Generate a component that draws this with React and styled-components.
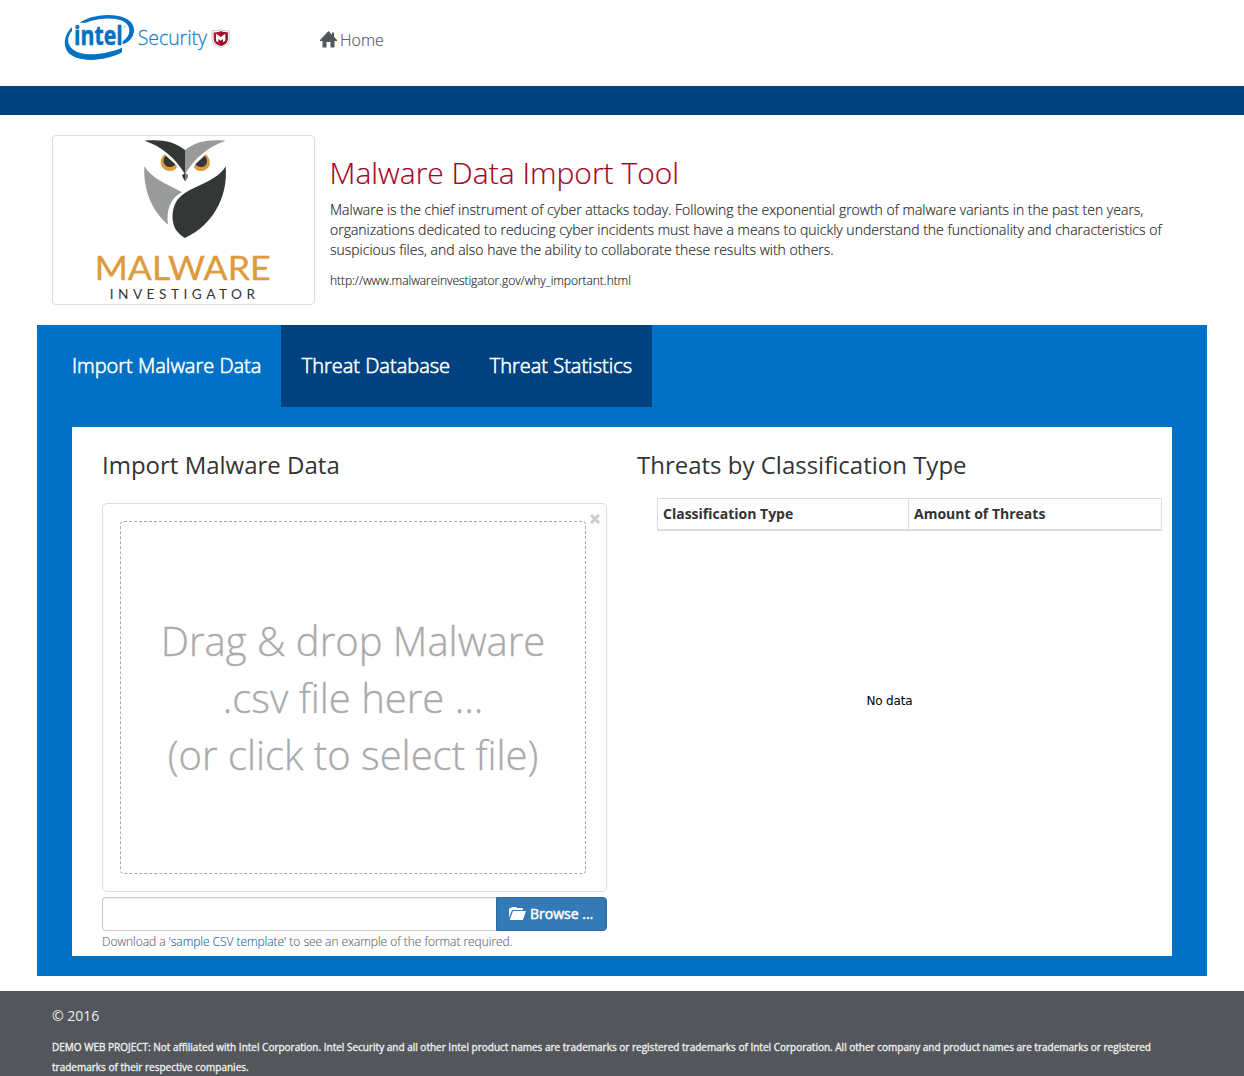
import React from "react";
import styled, { createGlobalStyle } from "styled-components";

const Global = createGlobalStyle`
  * { box-sizing: border-box; }
  body {
    margin: 0;
    background: #fff;
    color: #333;
    font-family: "Open Sans", sans-serif;
    font-size: 14px;
    font-weight: 300;
    line-height: 20px;
    overflow: hidden;
  }
  h1, h2, p { margin: 0; }
  a { color: inherit; text-decoration: none; }
`;

const Header = styled.header`
  display: flex;
  height: 86px;
  padding: 5px 0 0 55px;
`;

const BrandLogo = styled.svg`
  width: 190px;
  height: 65px;
  flex: none;
`;

const HomeLink = styled.a`
  display: flex;
  align-items: center;
  gap: 3px;
  height: 24px;
  margin: 23px 0 0 75px;
  color: #53565a;
  font-size: 16px;
  line-height: 24px;
  -webkit-text-stroke: 0.15px;
`;

const Band = styled.div`
  height: 29px;
  background: #004280;
`;

const Container = styled.div`
  width: 1170px;
  margin: 0 auto;
`;

const Intro = styled.section`
  display: flex;
  gap: 15px;
  padding: 20px 15px;
`;

const Thumbnail = styled.div`
  width: 263px;
  height: 170px;
  flex: none;
  border: 1px solid #ddd;
  border-radius: 4px;
  svg { display: block; }
`;

const IntroText = styled.div`
  padding-top: 20px;
  color: #222;
  white-space: nowrap;
  -webkit-text-stroke: 0.15px;
`;

const Title = styled.h1`
  color: #a50021;
  font-size: 30px;
  font-weight: 300;
  line-height: 36px;
  margin-left: -0.5px;
`;

const Copy = styled.p`
  margin-top: 9px;
  letter-spacing: -0.004px;
`;

const Line = styled.span`
  display: block;
`;

const Source = styled.p`
  margin-top: 11px;
  font-size: 12px;
  letter-spacing: -0.05px;
`;

const Panel = styled.main`
  height: 651px;
  padding: 0 35px 20px 15px;
  background: #0071c5;
`;

const Tabs = styled.nav`
  display: flex;
  height: 82px;
`;

const Tab = styled.a`
  padding: 26px 0 0 ${(p) => (p.$active ? 20 : 20.7)}px;
  width: ${(p) => p.$width}px;
  background: ${(p) => (p.$active ? "#0071c5" : "#004280")};
  color: #fff;
  font-size: 20px;
  font-weight: 300;
  line-height: 30px;
  -webkit-text-stroke: 0.6px;
  white-space: nowrap;
`;

const Card = styled.section`
  display: flex;
  gap: 30px;
  height: 529px;
  margin: 20px 0 0 20px;
  padding: 22px 10px 0 30px;
  background: #fff;
`;

const Column = styled.div`
  width: ${(p) => p.$width}px;
  flex: none;
`;

const Heading = styled.h2`
  font-size: 24px;
  font-weight: 400;
  line-height: 32px;
  white-space: nowrap;
`;

const Preview = styled.div`
  position: relative;
  height: 389px;
  margin-top: 22px;
  padding: 17px 20px 17px 17px;
  border: 1px solid #ddd;
  border-radius: 5px;
`;

const CloseButton = styled.button`
  position: absolute;
  top: 10px;
  right: 6px;
  width: 10px;
  height: 10px;
  padding: 0;
  border: 0;
  background: none;
  color: #ccc;
  svg { display: block; }
`;

const DropZone = styled.div`
  height: 353px;
  padding-top: 90px;
  border: 1px dashed #aaa;
  border-radius: 4px;
  color: #aaa;
  font-size: 40px;
  line-height: 57px;
  text-align: center;
  white-space: nowrap;
  -webkit-text-stroke: 0.3px;
`;

const FileRow = styled.div`
  display: flex;
  height: 34px;
  margin-top: 5px;
`;

const FileField = styled.div`
  flex: 1;
  border: 1px solid #ccc;
  border-right: 0;
  border-radius: 4px 0 0 4px;
  box-shadow: inset 0 1px 1px rgba(0, 0, 0, 0.075);
`;

const Browse = styled.button`
  display: flex;
  align-items: center;
  gap: 4px;
  width: 111px;
  padding: 0 0 0 12px;
  border: 1px solid #2e6da4;
  border-radius: 0 4px 4px 0;
  background: #337ab7;
  color: #fff;
  font: 400 14px/20px "Open Sans", sans-serif;
  -webkit-text-stroke: 0.5px;
  white-space: nowrap;
`;

const Hint = styled.p`
  margin-top: 1px;
  color: #666;
  font-size: 12px;
  letter-spacing: -0.05px;
  -webkit-text-stroke: 0.12px;
  white-space: nowrap;
  a { color: #23649c; }
`;

const Table = styled.div`
  display: grid;
  grid-template-columns: 251px 1fr;
  height: 33px;
  margin: 17px 0 0 20px;
  border: 1px solid #ddd;
  border-bottom-width: 2px;
`;

const HeadCell = styled.div`
  padding: 5px;
  border-right: ${(p) => (p.$last ? "0" : "1px solid #ddd")};
  font-weight: 700;
`;

const Empty = styled.p`
  width: 505px;
  margin-top: 160px;
  color: #000;
  font-family: "Lucida Grande", "DejaVu Sans", sans-serif;
  font-size: 12px;
  font-weight: 400;
  letter-spacing: -0.15px;
  text-align: center;
`;

const Footer = styled.footer`
  height: 85px;
  margin-top: 15px;
  padding: 15px 52px 0;
  background: #53565a;
  color: #eee;
  font-weight: 400;
  white-space: nowrap;
`;

const Legal = styled.p`
  margin-top: 11px;
  font-size: 10px;
  font-weight: 400;
  -webkit-text-stroke: 0.35px;
`;

function IntelSecurityLogo() {
  return (
    <BrandLogo viewBox="0 0 570 195" aria-label="intel Security">
      <g fill="#0071c5">
        <path d="M74 53 C103 33 153 25 190 33 C232 41 244 69 234 91 C228 105 217 114 203 118 L203 109 C219 98 227 83 221 66 C211 38 151 33 92 53 Z" />
        <path d="M51 67 L51 78 C37 92 35 114 49 129 C76 159 151 149 201 128 L201 142 C154 168 78 174 45 148 C20 125 28 88 51 67 Z" />
      </g>
      <text x="57" y="121" fill="#0071c5" stroke="#0071c5" strokeWidth="1.5" fontFamily="Open Sans, sans-serif" fontWeight="700" fontSize="80" textLength="146" lengthAdjust="spacingAndGlyphs">intel</text>
      <circle cx="208" cy="66" r="2.5" fill="none" stroke="#0071c5" />
      <text x="248" y="121" fill="#1682cc" stroke="#1682cc" strokeWidth="0.8" fontFamily="Open Sans, sans-serif" fontWeight="300" fontSize="59" textLength="208" lengthAdjust="spacingAndGlyphs">Security</text>
      <path d="M471 77 Q484 79 497 74 Q510 79 523 77 V105 Q521 119 497 128 Q473 119 471 105 Z" fill="#fff" stroke="#b5aeb0" strokeWidth="2" />
      <path d="M476 82 Q487 83 497 79 Q507 83 518 82 V104 Q516 117 497 123 Q478 117 476 104 Z" fill="#b5122e" />
      <path d="M497 79 Q507 83 518 82 V104 Q516 117 497 123 Z" fill="#931127" />
      <path d="M483 86 L497 96 L511 86 V108 L504 112 V102 L497 107 L490 102 V112 L483 108 Z" fill="#fff" />
    </BrandLogo>
  );
}

function OwlLogo() {
  return (
    <svg width="261" height="168" viewBox="24 18 783 504">
      <path d="M299 32 C350 27 390 35 420 60 V132 C390 83 350 49 299 32 Z" fill="#333735" />
      <path d="M542 32 C491 27 450 35 420 60 V132 C450 83 491 49 542 32 Z" fill="#999b9a" />
      <path d="M359 73 C339 89 345 121 373 123 C385 124 393 117 397 110 Z" fill="#dd9b3d" />
      <path d="M482 73 C502 89 498 121 470 123 C457 124 449 117 446 110 Z" fill="#dd9b3d" />
      <path d="M362 77 C349 91 357 110 374 111 C382 112 388 107 391 103 Z" fill="#333735" />
      <path d="M479 77 C492 91 486 110 469 111 C460 112 454 107 451 103 Z" fill="#333735" />
      <path d="M411 135 L420 130 L429 135 L427 143 L420 154 L414 143 Z" fill="#333735" />
      <path d="M420 130 L429 135 L427 143 L420 154 Z" fill="#777b79" />
      <path d="M298 109 C322 147 366 163 411 187 C375 204 363 244 369 284 C317 239 295 176 298 109 Z" fill="#999b9a" />
      <path d="M542 109 C516 154 456 162 409 197 C378 222 376 276 395 302 C404 314 414 320 420 324 C503 286 550 201 542 109 Z" fill="#333735" />
      <text x="149" y="450" fill="#dd9b3d" stroke="#dd9b3d" strokeWidth="1" fontFamily="Lato, sans-serif" fontWeight="400" fontSize="99" textLength="528" lengthAdjust="spacingAndGlyphs">MALWARE</text>
      <text x="194" y="507" fill="#333735" fontFamily="Lato, sans-serif" fontWeight="400" fontSize="41" letterSpacing="8" textLength="444" lengthAdjust="spacing">INVESTIGATOR</text>
    </svg>
  );
}

export default function App() {
  return (
    <>
      <Global />
      <Header>
        <IntelSecurityLogo />
        <HomeLink href="#">
          <svg width="17" height="18" viewBox="0 0 17 18" fill="currentColor">
            <path d="M8.5 0 L12 3.7 V1.5 H14 V5.8 L17 9 V10 H14.5 V16.5 H10.5 V11 H6.5 V16.5 H2.5 V10 H0 V9 Z" />
          </svg>
          Home
        </HomeLink>
      </Header>
      <Band />
      <Container>
        <Intro>
          <Thumbnail><OwlLogo /></Thumbnail>
          <IntroText>
            <Title>Malware Data Import Tool</Title>
            <Copy>
              <Line>Malware is the chief instrument of cyber attacks today. Following the exponential growth of malware variants in the past ten years,</Line>
              <Line>organizations dedicated to reducing cyber incidents must have a means to quickly understand the functionality and characteristics of</Line>
              <Line>suspicious files, and also have the ability to collaborate these results with others.</Line>
            </Copy>
            <Source>http://www.malwareinvestigator.gov/why_important.html</Source>
          </IntroText>
        </Intro>
        <Panel>
          <Tabs>
            <Tab $active $width={229} href="#">Import Malware Data</Tab>
            <Tab $width={188} href="#">Threat Database</Tab>
            <Tab $width={183} href="#">Threat Statistics</Tab>
          </Tabs>
          <Card>
            <Column $width={505}>
              <Heading>Import Malware Data</Heading>
              <Preview>
                <CloseButton aria-label="Remove">
                  <svg width="10" height="10" viewBox="0 0 10 10" stroke="currentColor" strokeWidth="3">
                    <path d="M1 1 L9 9 M9 1 L1 9" />
                  </svg>
                </CloseButton>
                <DropZone>
                  Drag &amp; drop Malware<br />.csv file here ...<br />(or click to select file)
                </DropZone>
              </Preview>
              <FileRow>
                <FileField />
                <Browse>
                  <svg width="17" height="14" viewBox="0 0 17 14" fill="currentColor">
                    <path d="M0 11 V2 L1 1 H2 L3 0 H7 L8 1 H13 L14 2 V3 H3.5 L2.5 4 Z" />
                    <path d="M4 4 H17 L14.2 12.3 L13.5 13 H.7 Z" />
                  </svg>
                  Browse ...
                </Browse>
              </FileRow>
              <Hint>Download a <a href="#">'sample CSV template'</a> to see an example of the format required.</Hint>
            </Column>
            <Column $width={525}>
              <Heading>Threats by Classification Type</Heading>
              <Table>
                <HeadCell>Classification Type</HeadCell>
                <HeadCell $last>Amount of Threats</HeadCell>
              </Table>
              <Empty>No data</Empty>
            </Column>
          </Card>
        </Panel>
      </Container>
      <Footer>
        <p>© 2016</p>
        <Legal>
          <Line>DEMO WEB PROJECT: Not affiliated with Intel Corporation. Intel Security and all other Intel product names are trademarks or registered trademarks of Intel Corporation. All other company and product names are trademarks or registered</Line>
          <Line>trademarks of their respective companies.</Line>
        </Legal>
      </Footer>
    </>
  );
}
